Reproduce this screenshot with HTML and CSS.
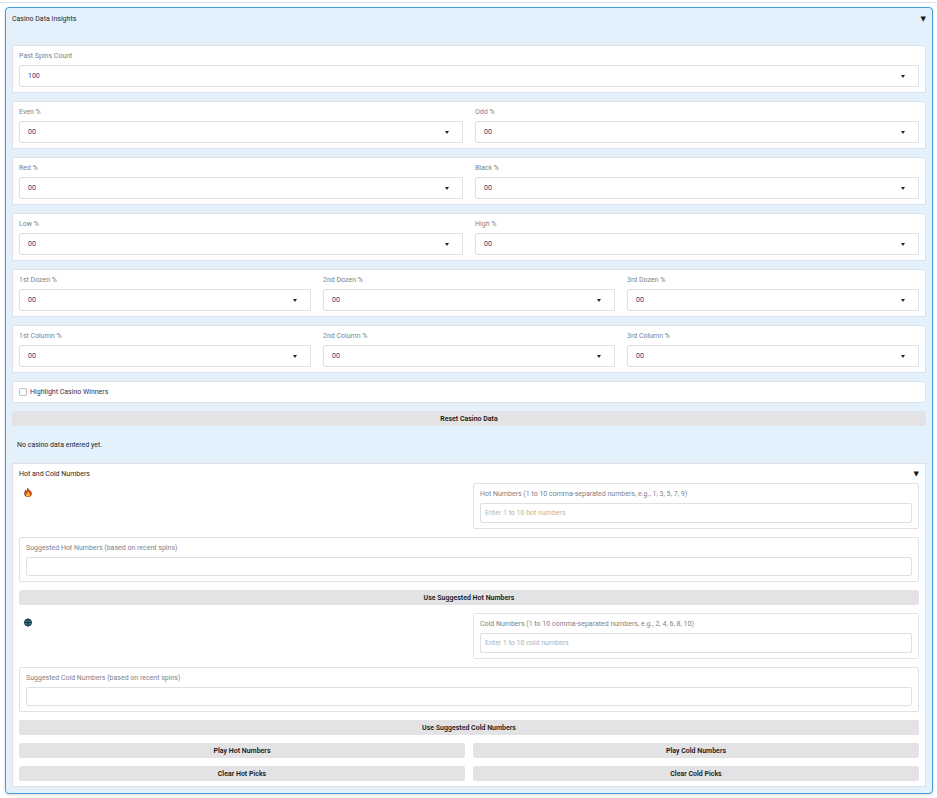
FILE: index.html
```html
<!DOCTYPE html>
<html lang="en">
<head>
  <meta charset="UTF-8">
  <meta name="viewport" content="width=device-width, initial-scale=1.0">
  <title>Casino Data Insights</title>
  <link rel="stylesheet" href="styles.css">
</head>
<body>
  <main>
    <details class="insights" open>
      <summary>Casino Data Insights <span class="arrow">▼</span></summary>

      <div class="stack">
        <div class="card">
          <div class="field">
            <label for="spins">Past Spins Count</label>
            <div class="select"><select id="spins"><option>100</option><option>200</option><option>500</option></select></div>
          </div>
        </div>

        <div class="card cols-2">
          <div class="field">
            <label for="even">Even %</label>
            <div class="select"><select id="even"><option>00</option></select></div>
          </div>
          <div class="field">
            <label for="odd">Odd %</label>
            <div class="select"><select id="odd"><option>00</option></select></div>
          </div>
        </div>

        <div class="card cols-2">
          <div class="field">
            <label for="red">Red %</label>
            <div class="select"><select id="red"><option>00</option></select></div>
          </div>
          <div class="field">
            <label for="black">Black %</label>
            <div class="select"><select id="black"><option>00</option></select></div>
          </div>
        </div>

        <div class="card cols-2">
          <div class="field">
            <label for="low">Low %</label>
            <div class="select"><select id="low"><option>00</option></select></div>
          </div>
          <div class="field">
            <label for="high">High %</label>
            <div class="select"><select id="high"><option>00</option></select></div>
          </div>
        </div>

        <div class="card cols-3">
          <div class="field">
            <label for="dozen1">1st Dozen %</label>
            <div class="select"><select id="dozen1"><option>00</option></select></div>
          </div>
          <div class="field">
            <label for="dozen2">2nd Dozen %</label>
            <div class="select"><select id="dozen2"><option>00</option></select></div>
          </div>
          <div class="field">
            <label for="dozen3">3rd Dozen %</label>
            <div class="select"><select id="dozen3"><option>00</option></select></div>
          </div>
        </div>

        <div class="card cols-3">
          <div class="field">
            <label for="column1">1st Column %</label>
            <div class="select"><select id="column1"><option>00</option></select></div>
          </div>
          <div class="field">
            <label for="column2">2nd Column %</label>
            <div class="select"><select id="column2"><option>00</option></select></div>
          </div>
          <div class="field">
            <label for="column3">3rd Column %</label>
            <div class="select"><select id="column3"><option>00</option></select></div>
          </div>
        </div>

        <div class="card check">
          <input type="checkbox" id="highlight">
          <label for="highlight">Highlight Casino Winners</label>
        </div>

        <button type="button">Reset Casino Data</button>

        <p class="status">No casino data entered yet.</p>

        <details class="numbers" open>
          <summary>Hot and Cold Numbers <span class="arrow">▼</span></summary>

          <div class="stack">
            <div class="pair">
              <svg class="icon" viewBox="0 0 16 18" role="img" aria-label="Hot">
                <path d="M7 0c1 3 8 6 8 11 0 4-3 7-7 7s-7-3-7-7c0-3 2-4 2-7 1 1 2 2 2 3 1-2 3-4 2-7z" fill="#d9480f" stroke="#3b2a28"/>
                <path d="M8 6c0 3 5 5 4 9-1 3-8 3-8 0 0-3 3-4 4-9z" fill="#ffb62e"/>
              </svg>
              <div class="card">
                <div class="field">
                  <label for="hot">Hot Numbers (1 to 10 comma-separated numbers, e.g., 1, 3, 5, 7, 9)</label>
                  <input type="text" id="hot" class="entry hot" placeholder="Enter 1 to 10 hot numbers">
                </div>
              </div>
            </div>

            <div class="card">
              <div class="field">
                <label for="hotSuggested">Suggested Hot Numbers (based on recent spins)</label>
                <input type="text" id="hotSuggested" readonly>
              </div>
            </div>

            <button type="button">Use Suggested Hot Numbers</button>

            <div class="pair">
              <svg class="icon" viewBox="0 0 16 18" role="img" aria-label="Cold">
                <circle cx="8" cy="9" r="7" fill="#3b98a5" stroke="#1f2d38" stroke-width="2"/>
                <path d="M8 1v16M1 9h14" fill="none" stroke="#1f2d38" stroke-width="2"/>
                <path d="M4 4l8 10M12 4L4 14" fill="none" stroke="#1f2d38"/>
              </svg>
              <div class="card">
                <div class="field">
                  <label for="cold">Cold Numbers (1 to 10 comma-separated numbers, e.g., 2, 4, 6, 8, 10)</label>
                  <input type="text" id="cold" class="entry cold" placeholder="Enter 1 to 10 cold numbers">
                </div>
              </div>
            </div>

            <div class="card">
              <div class="field">
                <label for="coldSuggested">Suggested Cold Numbers (based on recent spins)</label>
                <input type="text" id="coldSuggested" readonly>
              </div>
            </div>

            <button type="button">Use Suggested Cold Numbers</button>

            <div class="pair">
              <button type="button">Play Hot Numbers</button>
              <button type="button">Play Cold Numbers</button>
            </div>
            <div class="pair">
              <button type="button">Clear Hot Picks</button>
              <button type="button">Clear Cold Picks</button>
            </div>
          </div>
        </details>
      </div>
    </details>
  </main>
</body>
</html>
```
FILE: styles.css
```css
* {
  box-sizing: border-box;
}
body {
  margin: 0;
  padding-top: 2px;
  background: #fff;
  color: #27272a;
  font-family: Roboto, "Open Sans", sans-serif;
  font-size: 7px;
  line-height: 10px;
}
main {
  border-top: 1px solid #d5e0e8;
  padding: 4px 4px 4px 5px;
}
.insights {
  padding: 6px;
  border: 1px solid #449bdc;
  border-radius: 4px;
  background: #e3f1fc;
  box-shadow: 0 1px 3px rgba(0, 0, 0, 0.15);
}
summary {
  display: flex;
  justify-content: space-between;
  list-style: none;
  cursor: pointer;
}
.insights > summary {
  margin-bottom: 21px;
}
.arrow {
  font-family: "DejaVu Sans", sans-serif;
  font-size: 7px;
  color: #18181b;
}
.stack {
  display: flex;
  flex-direction: column;
  gap: 8px;
}
.card {
  padding: 5px 6px;
  border: 1px solid #dfe1e5;
  border-radius: 2px;
  background: #fff;
}
.cols-2,
.cols-3 {
  display: grid;
  gap: 12px;
  grid-template-columns: repeat(2, 1fr);
}
.cols-3 {
  grid-template-columns: repeat(3, 1fr);
}
.field {
  display: flex;
  flex-direction: column;
  gap: 4px;
}
.field label {
  color: #818187;
}
.select {
  position: relative;
}
.select::after {
  content: "";
  position: absolute;
  top: 10px;
  right: 14px;
  border: solid transparent;
  border-width: 3px 2px 0;
  border-top-color: #27272a;
  pointer-events: none;
}
select,
input[type="text"] {
  display: block;
  width: 100%;
  height: 22px;
  margin: 0;
  padding: 0 8px;
  border: 1px solid #dfe0e3;
  border-radius: 2px;
  background: #fff;
  color: #34456f;
  font: inherit;
  appearance: none;
}
input[type="text"] {
  height: 19px;
  padding: 0 4px;
}
input.entry {
  height: 20px;
}
.hot::placeholder {
  color: #c0b49a;
}
.cold::placeholder {
  color: #b0b0bd;
}
.check {
  display: flex;
  align-items: center;
  gap: 3px;
  color: #2f3558;
}
.check input {
  width: 8px;
  height: 8px;
  margin: 0;
  border: 1px solid #bbbbc0;
  border-radius: 2px;
  background: #fff;
  appearance: none;
}
.check input:checked {
  background: #449bdc;
}
button {
  height: 15px;
  padding: 0 8px;
  border: none;
  border-radius: 2px;
  background: #e3e3e5;
  color: #18181b;
  font: inherit;
  font-weight: 600;
  cursor: pointer;
}
button:hover {
  background: #d4d4d8;
}
.status {
  margin: 6px 5px 5px;
}
.numbers {
  padding: 5px 6px;
  border: 1px solid #dfe1e5;
  background: #fff;
}
.numbers > summary {
  margin-bottom: 4px;
}
.pair {
  display: grid;
  grid-template-columns: 1fr 1fr;
  gap: 8px;
}
.icon {
  width: 8px;
  height: 9px;
  margin: 5px;
}
```
